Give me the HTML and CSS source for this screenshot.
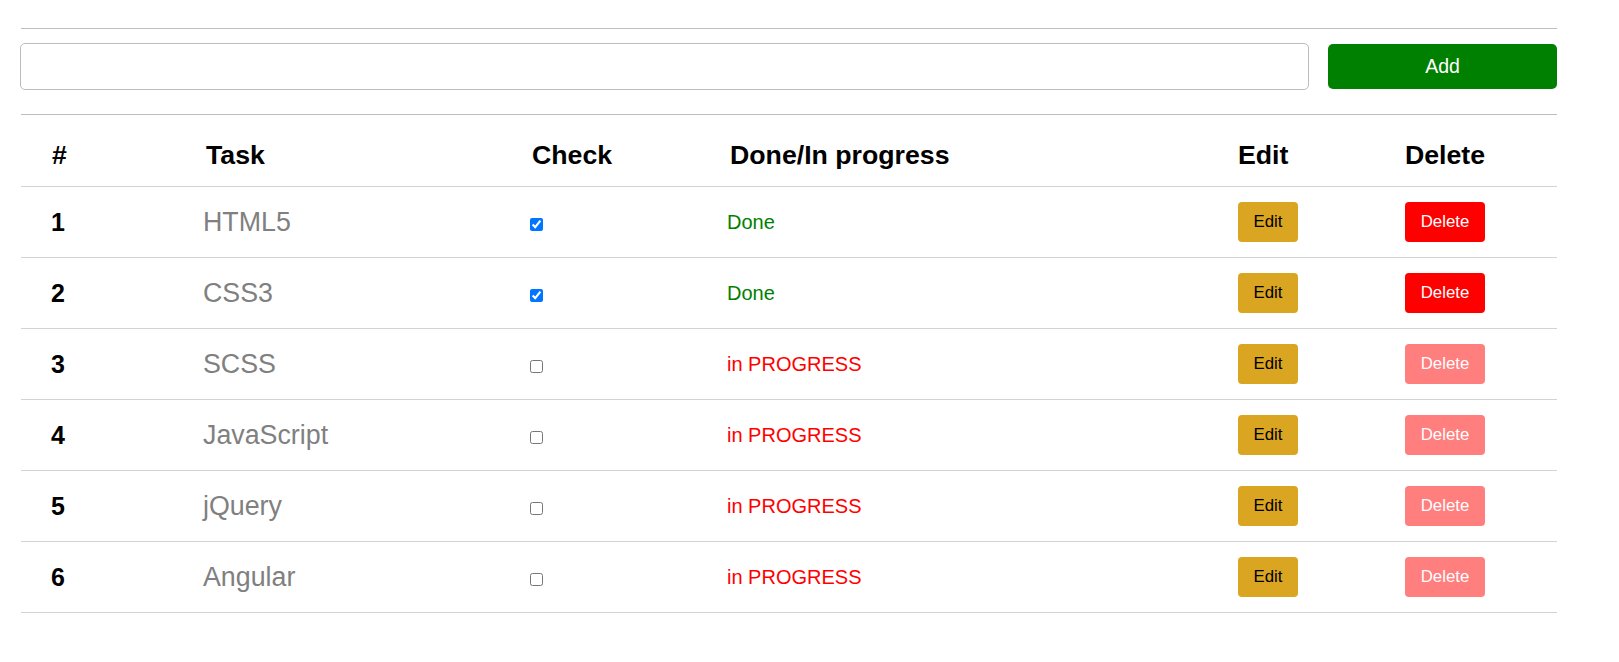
FILE: index.html
```html
<!DOCTYPE html>
<html lang="en">
<head>
<meta charset="utf-8">
<title>Tasks</title>
<link rel="stylesheet" href="styles.css">
</head>
<body>
<div class="app">
  <div class="rule rule-top"></div>
  <form class="add-form">
    <input class="task-input" type="text">
    <button class="btn-add" type="button">Add</button>
  </form>
  <div class="rule rule-bottom"></div>
  <div class="grid">
    <div class="row head">
      <div class="cell">#</div>
      <div class="cell">Task</div>
      <div class="cell">Check</div>
      <div class="cell">Done/In progress</div>
      <div class="cell">Edit</div>
      <div class="cell">Delete</div>
    </div>
    <div class="row">
      <div class="cell num">1</div>
      <div class="cell name">HTML5</div>
      <div class="cell chk"><input type="checkbox" checked></div>
      <div class="cell status done">Done</div>
      <div class="cell act"><button class="btn-edit" type="button">Edit</button></div>
      <div class="cell act"><button class="btn-del" type="button">Delete</button></div>
    </div>
    <div class="row">
      <div class="cell num">2</div>
      <div class="cell name">CSS3</div>
      <div class="cell chk"><input type="checkbox" checked></div>
      <div class="cell status done">Done</div>
      <div class="cell act"><button class="btn-edit" type="button">Edit</button></div>
      <div class="cell act"><button class="btn-del" type="button">Delete</button></div>
    </div>
    <div class="row">
      <div class="cell num">3</div>
      <div class="cell name">SCSS</div>
      <div class="cell chk"><input type="checkbox"></div>
      <div class="cell status progress">in PROGRESS</div>
      <div class="cell act"><button class="btn-edit" type="button">Edit</button></div>
      <div class="cell act"><button class="btn-del faded" type="button">Delete</button></div>
    </div>
    <div class="row">
      <div class="cell num">4</div>
      <div class="cell name">JavaScript</div>
      <div class="cell chk"><input type="checkbox"></div>
      <div class="cell status progress">in PROGRESS</div>
      <div class="cell act"><button class="btn-edit" type="button">Edit</button></div>
      <div class="cell act"><button class="btn-del faded" type="button">Delete</button></div>
    </div>
    <div class="row">
      <div class="cell num">5</div>
      <div class="cell name">jQuery</div>
      <div class="cell chk"><input type="checkbox"></div>
      <div class="cell status progress">in PROGRESS</div>
      <div class="cell act"><button class="btn-edit" type="button">Edit</button></div>
      <div class="cell act"><button class="btn-del faded" type="button">Delete</button></div>
    </div>
    <div class="row">
      <div class="cell num">6</div>
      <div class="cell name">Angular</div>
      <div class="cell chk"><input type="checkbox"></div>
      <div class="cell status progress">in PROGRESS</div>
      <div class="cell act"><button class="btn-edit" type="button">Edit</button></div>
      <div class="cell act"><button class="btn-del faded" type="button">Delete</button></div>
    </div>
  </div>
</div>
</body>
</html>
```

FILE: styles.css
```css
html, body {
  margin: 0;
  padding: 0;
  background: #fff;
}
body {
  font-family: "Liberation Sans", Arial, sans-serif;
  color: #000;
}
.app {
  width: 1536px;
  margin-left: 21px;
  padding-top: 28px;
}
.rule {
  height: 1px;
  background: #bcc0bc;
}
.add-form {
  display: flex;
  align-items: center;
  gap: 19px;
  margin: 14px 0 24px 0;
}
.task-input {
  flex: 1;
  box-sizing: border-box;
  height: 47px;
  margin: 0 0 0 -1px;
  border: 1px solid #bbbdbb;
  border-radius: 5px;
  font-family: inherit;
  font-size: 18px;
  padding: 0 10px;
  outline: none;
}
.btn-add {
  width: 229px;
  height: 45px;
  border: none;
  border-radius: 5px;
  background: #008000;
  color: #fff;
  font-family: inherit;
  font-size: 19.5px;
  padding: 0;
}
.row {
  display: grid;
  grid-template-columns: 154px 326px 198px 508px 167px 183px;
  align-items: center;
  box-sizing: border-box;
  height: 71px;
  border-bottom: 1px solid #d3d3d3;
}
.row.head {
  height: 72px;
  padding-top: 9px;
}
.head .cell {
  font-weight: bold;
  font-size: 26.7px;
  padding-left: 31px;
}
.cell {
  padding-left: 28px;
  white-space: nowrap;
}
.num {
  font-weight: bold;
  font-size: 25px;
  padding-left: 30px;
}
.name {
  font-size: 26.8px;
  color: #808080;
}
.chk {
  display: flex;
  align-items: center;
}
.chk input {
  margin: 5px 0 0 1px;
  width: 13px;
  height: 13px;
}
.status {
  font-size: 20px;
}
.done {
  color: #008000;
}
.progress {
  color: #ff0000;
}
.act {
  padding-left: 31px;
  display: flex;
  align-items: center;
}
.btn-edit,
.btn-del {
  height: 40px;
  border: none;
  border-radius: 4px;
  font-family: inherit;
  font-size: 16.8px;
  padding: 0;
}
.btn-edit {
  width: 60px;
  background: #daa520;
  color: #000;
}
.btn-del {
  width: 80px;
  background: #ff0000;
  color: #fff;
}
.btn-del.faded {
  opacity: 0.5;
}
```
